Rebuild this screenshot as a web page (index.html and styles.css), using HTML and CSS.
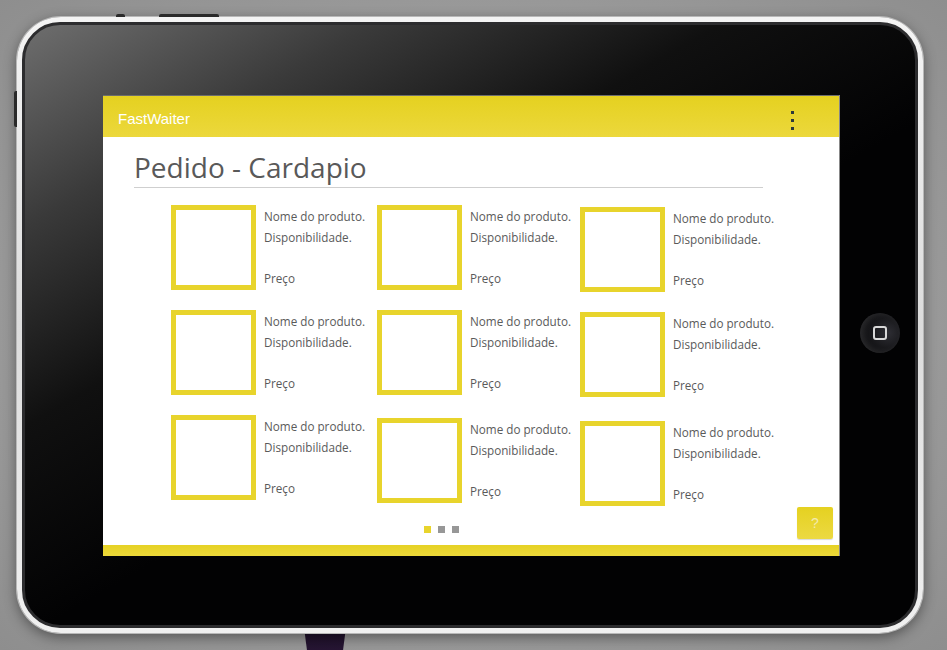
FILE: index.html
```html
<!DOCTYPE html>
<html lang="pt">
<head>
<meta charset="utf-8">
<title>FastWaiter</title>
<link rel="stylesheet" href="styles.css">
</head>
<body>
<div class="stand"></div>
<div class="tablet">
  <span class="btn-top btn-top-a"></span>
  <span class="btn-top btn-top-b"></span>
  <span class="btn-side"></span>
  <div class="bezel">
    <div class="screen">
      <header class="appbar">
        <span class="brand">FastWaiter</span>
        <span class="kebab"><i></i><i></i><i></i></span>
      </header>
      <main class="content">
        <h1 class="title">Pedido - Cardapio</h1>
        <div class="grid">
          <div class="card"><div class="thumb"></div><div class="info"><p>Nome do produto.</p><p>Disponibilidade.</p><p class="price">Preço</p></div></div>
          <div class="card"><div class="thumb"></div><div class="info"><p>Nome do produto.</p><p>Disponibilidade.</p><p class="price">Preço</p></div></div>
          <div class="card low"><div class="thumb"></div><div class="info"><p>Nome do produto.</p><p>Disponibilidade.</p><p class="price">Preço</p></div></div>
          <div class="card"><div class="thumb"></div><div class="info"><p>Nome do produto.</p><p>Disponibilidade.</p><p class="price">Preço</p></div></div>
          <div class="card"><div class="thumb"></div><div class="info"><p>Nome do produto.</p><p>Disponibilidade.</p><p class="price">Preço</p></div></div>
          <div class="card low"><div class="thumb"></div><div class="info"><p>Nome do produto.</p><p>Disponibilidade.</p><p class="price">Preço</p></div></div>
          <div class="card"><div class="thumb"></div><div class="info"><p>Nome do produto.</p><p>Disponibilidade.</p><p class="price">Preço</p></div></div>
          <div class="card low2"><div class="thumb"></div><div class="info"><p>Nome do produto.</p><p>Disponibilidade.</p><p class="price">Preço</p></div></div>
          <div class="card low3"><div class="thumb"></div><div class="info"><p>Nome do produto.</p><p>Disponibilidade.</p><p class="price">Preço</p></div></div>
        </div>
        <div class="pager"><span class="dot active"></span><span class="dot"></span><span class="dot"></span></div>
        <button class="help">?</button>
      </main>
      <footer class="bottombar"></footer>
    </div>
  </div>
  <div class="home"><span class="home-icon"></span></div>
</div>
</body>
</html>
```

FILE: styles.css
```css
html, body {
  margin: 0;
  padding: 0;
}
body {
  width: 947px;
  height: 650px;
  overflow: hidden;
  position: relative;
  background: radial-gradient(ellipse at 50% 50%, #a8a8a8 0%, #9c9c9c 60%, #8e8e8e 100%);
  font-family: "Open Sans", "Liberation Sans", sans-serif;
}
.stand {
  position: absolute;
  left: 303px;
  top: 620px;
  width: 44px;
  height: 40px;
  background: linear-gradient(180deg, #1a0d24, #2a1838);
  clip-path: polygon(0 0, 100% 0, 88% 100%, 12% 100%);
}
.tablet {
  position: relative;
  margin: 17px 0 0 17px;
  width: 906px;
  height: 616px;
  box-sizing: border-box;
  padding: 5px;
  border-radius: 44px;
  background: linear-gradient(180deg, #f4f4f4 0%, #dcdcdc 50%, #f0f0f0 100%);
  box-shadow: 0 0 0 1px #b8b8b8, 0 4px 14px rgba(0, 0, 0, 0.45);
}
.btn-top {
  position: absolute;
  top: -3px;
  height: 3px;
  background: #2a2a2a;
  border-radius: 2px 2px 0 0;
}
.btn-top-a { left: 99px; width: 9px; }
.btn-top-b { left: 142px; width: 60px; }
.btn-side {
  position: absolute;
  left: -3px;
  top: 74px;
  width: 3px;
  height: 36px;
  background: #2a2a2a;
  border-radius: 2px 0 0 2px;
}
.bezel {
  width: 100%;
  height: 100%;
  box-sizing: border-box;
  border: 3px solid #2c2c2e;
  border-radius: 38px;
  background: linear-gradient(150deg, #6e6e6e 0%, #3a3a3a 18%, #101010 36%, #020203 55%, #020203 100%);
  padding: 70px 76px 69px 78px;
}
.screen {
  width: 736px;
  height: 461px;
  display: flex;
  flex-direction: column;
  background: #fff;
  box-shadow: 1px 0 0 #888;
}
.appbar {
  height: 42px;
  flex: none;
  box-sizing: border-box;
  border-top: 1px solid #6d6d6d;
  display: flex;
  align-items: center;
  justify-content: space-between;
  padding: 0 45px 0 15px;
  background: linear-gradient(180deg, #e5d120 0%, #ecd83c 100%);
}
.brand {
  font-family: "Liberation Sans", Arial, sans-serif;
  font-size: 15px;
  color: #fff;
  margin-top: 3px;
}
.kebab {
  display: flex;
  flex-direction: column;
  gap: 5px;
  margin-top: 8px;
}
.kebab i {
  display: block;
  width: 3px;
  height: 3px;
  background: #2d3a3a;
}
.content {
  flex: 1;
  position: relative;
  display: flex;
  flex-direction: column;
}
.title {
  margin: 0 0 0 31px;
  width: 629px;
  box-sizing: border-box;
  padding-top: 11px;
  height: 51px;
  font-weight: 400;
  font-size: 28px;
  line-height: 38px;
  color: #595959;
  border-bottom: 1px solid #cfcfcf;
}
.grid {
  margin: 17px 0 0 68px;
  display: grid;
  grid-template-columns: 206px 203px 200px;
  grid-auto-rows: 105px;
}
.card {
  display: flex;
  align-items: flex-start;
}
.card.low { padding-top: 2px; }
.card.low2 { padding-top: 3px; }
.card.low3 { padding-top: 6px; }
.thumb {
  width: 85px;
  height: 85px;
  box-sizing: border-box;
  border: 5px solid #e8d42c;
  flex: none;
}
.info {
  margin-left: 8px;
  padding-top: 1px;
  font-size: 11.7px;
  color: #5a5a5a;
}
.info p {
  margin: 0;
  line-height: 21px;
}
.info p.price {
  margin-top: 20px;
}
.pager {
  margin: 6px 0 0 321px;
  display: flex;
  gap: 7px;
}
.dot {
  width: 7px;
  height: 7px;
  background: #979797;
}
.dot.active {
  background: #e8d42c;
}
.help {
  position: absolute;
  right: 6px;
  bottom: 6px;
  width: 36px;
  height: 32px;
  border: none;
  border-radius: 2px;
  padding: 0;
  background: linear-gradient(180deg, #e5d120 0%, #ecd942 100%);
  color: #f2eab0;
  font-family: "Liberation Sans", Arial, sans-serif;
  font-size: 14px;
  box-shadow: 0 1px 1px rgba(0, 0, 0, 0.15);
}
.bottombar {
  height: 11px;
  flex: none;
  background: linear-gradient(180deg, #e6d224 0%, #ecd83a 100%);
}
.home {
  position: absolute;
  left: 843px;
  top: 296px;
  width: 40px;
  height: 40px;
  border-radius: 50%;
  background: radial-gradient(circle at 70% 50%, #2e2e34 0%, #18181b 45%, #0a0a0c 100%);
  box-shadow: inset 3px 0 6px rgba(255, 255, 255, 0.12);
  display: flex;
  align-items: center;
  justify-content: center;
}
.home-icon {
  width: 10px;
  height: 10px;
  border: 2px solid #d8d8d8;
  border-radius: 3px;
}
```
